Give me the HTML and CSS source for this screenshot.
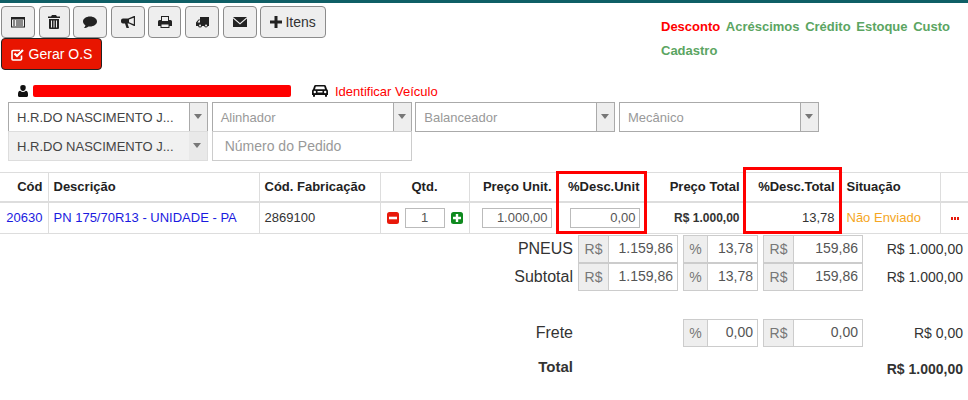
FILE: index.html
```html
<!DOCTYPE html>
<html lang="pt-BR">
<head>
<meta charset="utf-8">
<title>Ordem de Serviço</title>
<link rel="stylesheet" href="styles.css">
</head>
<body>
<div class="topbar"></div>
<header class="header">
  <div class="toolbar">
    <div class="btn-row">
      <button class="btn w34"><svg class="ico" viewBox="0 0 14 14"><path fill-rule="evenodd" d="M0 2h14v10.500H0zM1 4.500v7h12v-7zM2 5.500h2v1H2zM5 5.500h7v1H5zM2 7.500h2v1H2zM5 7.500h7v1H5zM2 9.500h2v1H2zM5 9.500h7v1H5z"/></svg></button>
      <button class="btn w31"><svg class="ico" viewBox="0 0 14 14"><path fill-rule="evenodd" d="M5 0h4l1 1.600h3V3H1V1.600h3zM2 4h10v9a1 1 0 0 1-1 1H3a1 1 0 0 1-1-1zM4 5.500v7h1v-7zM6.500 5.500v7h1v-7zM9 5.500v7h1v-7z"/></svg></button>
      <button class="btn w34"><svg class="ico" viewBox="0 0 14 14"><path d="M7 1.500c3.900 0 7 2.200 7 5s-3.100 5-7 5c-.6 0-1.100 0-1.600-.1C4 12.700 2.500 13 .8 13c.9-.8 1.500-1.700 1.600-2.800C.9 9.300 0 8 0 6.500c0-2.800 3.100-5 7-5z"/></svg></button>
      <button class="btn w34"><svg class="ico" viewBox="0 0 14 14"><path fill-rule="evenodd" d="M14 1v10h-1L8 8.500H6.500L8 13H5.500L4 8.500H2a2 2 0 0 1-2-2v-1a2 2 0 0 1 2-2h5L13 1zM12.800 2.700 8 4.500v2.800l4.800 1.900z"/></svg></button>
      <button class="btn w33"><svg class="ico" viewBox="0 0 14 14"><path fill-rule="evenodd" d="M3 1h8v4h1.500A1.500 1.500 0 0 1 14 6.500V11h-2.500v2h-9v-2H0V6.500A1.500 1.500 0 0 1 1.500 5H3zM4 2v4h6V2zM3.500 9.500V12h7V9.500z"/></svg></button>
      <button class="btn w34"><svg class="ico" viewBox="0 0 14 14"><path fill-rule="evenodd" d="M5 2h9v9h-1.100a2 2 0 0 1-3.800 0H7a2 2 0 0 1-3.900 0H1V7.500L3.500 4.500H5zM2.500 7.500H5V5.300H4zM5 9.500a1 1 0 1 0 .1 2 1 1 0 0 0-.1-2zM11 9.500a1 1 0 1 0 .1 2 1 1 0 0 0-.1-2z"/></svg></button>
      <button class="btn w34"><svg class="ico" viewBox="0 0 14 14"><path d="M0 2h14L7 8zM0 3.500V12h14V3.500L7 9.500z"/></svg></button>
      <button class="btn w66"><svg class="ico ico-plus" viewBox="0 0 12 12"><path d="M4.500 0h3v4.500H12v3H7.500V12h-3V7.500H0v-3h4.500z"/></svg>Itens</button>
    </div>
    <button class="btn btn-danger"><svg class="ico ico-check" viewBox="0 0 13 13"><path fill="none" stroke="#fff" stroke-width="1.600" d="M10.500 7.500V11a1 1 0 0 1-1 1H2a1 1 0 0 1-1-1V3.500a1 1 0 0 1 1-1h7"/><path fill="none" stroke="#fff" stroke-width="2.200" d="M3.500 5.500 6 8l6-6"/></svg>Gerar O.S</button>
  </div>
  <nav class="links">
    <span class="link link-active">Desconto</span>
    <span class="link">Acréscimos</span>
    <span class="link">Crédito</span>
    <span class="link">Estoque</span>
    <span class="link">Custo</span>
    <span class="link">Cadastro</span>
  </nav>
</header>

<div class="client">
  <svg class="ico-user" viewBox="0 0 10 12"><path d="M5 0a2.700 2.700 0 0 1 2.700 3C7.700 4.600 6.600 6 5 6S2.300 4.600 2.300 3A2.700 2.700 0 0 1 5 0zM2.200 5.800C3 6.600 4 7 5 7s2-.4 2.800-1.200C9.300 6 10 7 10 9v1.500c0 .8-.6 1.500-1.500 1.500h-7C.6 12 0 11.300 0 10.500V9c0-2 .7-3 2.200-3.200z"/></svg>
  <div class="redacted"></div>
  <svg class="ico-car" viewBox="0 0 16 12"><path fill-rule="evenodd" d="M3.500 0h9c.7 0 1.200.4 1.400 1L15 4.200c.6.400 1 1 1 1.800v4h-1v1a1 1 0 0 1-2 0v-1H3v1a1 1 0 0 1-2 0v-1H0V6c0-.8.400-1.400 1-1.800L2.100 1C2.300.4 2.800 0 3.500 0zM3.800 1.500 3 4.200h10l-.8-2.700zM2.800 5.800a1.200 1.200 0 1 0 0 2.400 1.200 1.200 0 0 0 0-2.400zM13.200 5.800a1.200 1.200 0 1 0 0 2.400 1.200 1.200 0 0 0 0-2.400zM5.500 6v1.500h5V6z"/></svg>
  <span class="vehicle">Identificar Veículo</span>
</div>

<div class="selects">
  <div class="select"><span class="select-value">H.R.DO NASCIMENTO J...</span><span class="select-arrow"></span></div>
  <div class="select"><span class="select-value placeholder">Alinhador</span><span class="select-arrow"></span></div>
  <div class="select"><span class="select-value placeholder">Balanceador</span><span class="select-arrow"></span></div>
  <div class="select"><span class="select-value placeholder">Mecânico</span><span class="select-arrow"></span></div>
  <div class="select select-disabled"><span class="select-value">H.R.DO NASCIMENTO J...</span><span class="select-arrow"></span></div>
  <div class="order-input">Número do Pedido</div>
</div>

<div class="table-wrap">
  <table class="items">
    <colgroup>
      <col class="c-cod"><col class="c-desc"><col class="c-fab"><col class="c-qtd"><col class="c-unit"><col class="c-dunit"><col class="c-total"><col class="c-dtotal"><col class="c-sit"><col class="c-act">
    </colgroup>
    <thead>
      <tr>
        <th class="right">Cód</th>
        <th>Descrição</th>
        <th>Cód. Fabricação</th>
        <th class="center">Qtd.</th>
        <th class="right">Preço Unit.</th>
        <th class="right">%Desc.Unit</th>
        <th class="right">Preço Total</th>
        <th class="right">%Desc.Total</th>
        <th class="sit">Situação</th>
        <th></th>
      </tr>
    </thead>
    <tbody>
      <tr>
        <td class="right blue">20630</td>
        <td class="blue">PN 175/70R13 - UNIDADE - PA</td>
        <td>2869100</td>
        <td>
          <div class="qty">
            <svg class="qty-ico" viewBox="0 0 12 12"><rect width="12" height="12" rx="2.500" fill="#e8190b"/><rect x="2" y="4.700" width="8" height="2.600" fill="#fff"/></svg>
            <span class="field qty-field">1</span>
            <svg class="qty-ico" viewBox="0 0 12 12"><rect width="12" height="12" rx="2.500" fill="#0f8a1f"/><path fill="#fff" d="M4.800 2h2.400v2.800H10v2.400H7.200V10H4.800V7.200H2V4.800h2.800z"/></svg>
          </div>
        </td>
        <td class="right"><span class="field num-field">1.000,00</span></td>
        <td class="right"><span class="field num-field">0,00</span></td>
        <td class="right strong">R$ 1.000,00</td>
        <td class="right">13,78</td>
        <td class="sit orange">Não Enviado</td>
        <td class="act"><span class="dots"><i></i><i></i><i></i></span></td>
      </tr>
    </tbody>
  </table>
  <div class="mark mark-unit"></div>
  <div class="mark mark-total"></div>
</div>

<section class="totals">
  <div class="total-row">
    <div class="t-label">PNEUS</div>
    <div class="group"><span class="addon a-rs">R$</span><span class="gval">1.159,86</span></div>
    <div class="group"><span class="addon a-pc">%</span><span class="gval">13,78</span></div>
    <div class="group"><span class="addon a-rs">R$</span><span class="gval">159,86</span></div>
    <div class="t-value">R$ 1.000,00</div>
  </div>
  <div class="total-row">
    <div class="t-label">Subtotal</div>
    <div class="group"><span class="addon a-rs">R$</span><span class="gval">1.159,86</span></div>
    <div class="group"><span class="addon a-pc">%</span><span class="gval">13,78</span></div>
    <div class="group"><span class="addon a-rs">R$</span><span class="gval">159,86</span></div>
    <div class="t-value">R$ 1.000,00</div>
  </div>
  <div class="total-row row-frete">
    <div class="t-label">Frete</div>
    <div></div>
    <div class="group"><span class="addon a-pc">%</span><span class="gval">0,00</span></div>
    <div class="group"><span class="addon a-rs">R$</span><span class="gval">0,00</span></div>
    <div class="t-value">R$ 0,00</div>
  </div>
  <div class="total-row row-total">
    <div class="t-label">Total</div>
    <div></div><div></div><div></div>
    <div class="t-value">R$ 1.000,00</div>
  </div>
</section>
</body>
</html>
```

FILE: styles.css
```css
* { box-sizing: border-box; }
html, body { margin: 0; padding: 0; background: #fff; }
body { font-family: "Liberation Sans", Arial, sans-serif; font-size: 13px; color: #333; overflow: hidden; }

.topbar { height: 3px; background: #0f5f66; }

.header { display: flex; justify-content: space-between; padding: 3px 0 0 1px; height: 78px; }
.toolbar { display: flex; flex-direction: column; align-items: flex-start; }
.btn-row { display: flex; gap: 3.6px; }
.btn {
  display: flex; align-items: center; justify-content: center;
  height: 32px; padding: 0; border: 1px solid #8c8c8c; border-radius: 4px;
  background: #eee; color: #333; font: 14px "Liberation Sans", Arial, sans-serif;
}
.w31 { width: 31px; } .w33 { width: 33px; } .w34 { width: 34px; } .w66 { width: 66px; }
.ico { width: 14px; height: 14px; fill: #222; }
.ico-plus { width: 12px; height: 12px; margin-right: 3px; }
.btn-danger { width: 101px; height: 32px; background: #e81500; border-color: #222; color: #fff; }
.ico-check { width: 13px; height: 13px; margin-right: 5px; fill: none; }

.links { display: flex; flex-wrap: wrap; align-content: flex-start; column-gap: 5.6px; width: 307px; padding-top: 9px; line-height: 24px; }
.link { font-weight: bold; font-size: 13px; color: #5ba562; }
.link-active { color: #f00; }

.client { display: flex; align-items: center; height: 20px; padding-left: 18px; }
.ico-user { width: 10px; height: 12px; fill: #111; }
.redacted { width: 258px; height: 12px; margin-left: 5px; background: #f00; border-radius: 2px; }
.ico-car { width: 16px; height: 12px; margin-left: 21px; fill: #111; }
.vehicle { margin-left: 7px; font-size: 13px; color: #f00; }

.selects { display: grid; grid-template-columns: repeat(4, 200px); column-gap: 3.67px; margin-top: 1px; padding-left: 8px; }
.select { display: flex; height: 30px; border: 1px solid #aaa; background: #fff; }
.select-value { flex: 1; padding-left: 8px; line-height: 29px; font-size: 13px; color: #444; }
.placeholder { color: #999; }
.select-arrow { position: relative; width: 18px; border-left: 1px solid #aaa; background: #eee; }
.select-arrow::after {
  content: ""; position: absolute; left: 4px; top: 11px;
  border: 4px solid transparent; border-top: 5px solid #777; border-bottom: 0;
}
.select-disabled { margin-top: -1px; border-color: #ddd; background: #f1f1f1; }
.select-disabled .select-arrow { border-left: 0; background: #e9e9e9; }
.order-input { height: 30px; margin-top: -1px; padding: 6px 0 0 12px; border: 1px solid #ccc; font-size: 14px; color: #999; }

.table-wrap { position: relative; margin-top: 11px; }
.items { width: 968px; table-layout: fixed; border-collapse: collapse; font-size: 13px; }
.c-cod { width: 48px; } .c-desc { width: 211px; } .c-fab { width: 121px; } .c-qtd { width: 89px; }
.c-unit { width: 88px; } .c-dunit { width: 88px; } .c-total { width: 100px; } .c-dtotal { width: 95px; }
.c-sit { width: 100px; } .c-act { width: 28px; }
.items th, .items td { padding: 0 5px; border: 1px solid #ddd; text-align: left; white-space: nowrap; overflow: hidden; }
.items th:first-child, .items td:first-child { border-left: 0; }
.items th:last-child, .items td:last-child { border-right: 0; }
.items th { height: 29px; font-size: 13px; font-weight: bold; color: #222; border-bottom-width: 2px; }
.items td { height: 32px; color: #333; }
.items .right { text-align: right; }
.items .center { text-align: center; }
.items .blue { color: #1a1ae0; }
.items .strong { font-size: 12px; font-weight: bold; }
.items .sit { padding-left: 6px; }
.items .orange { color: #f5a623; }
.items .act { padding-left: 10px; }
.field { display: inline-block; height: 20px; border: 1px solid #bbb; background: #fff; line-height: 18px; vertical-align: middle; font-size: 13px; color: #555; }
.num-field { width: 70px; padding-right: 3px; text-align: right; }
.qty { display: flex; align-items: center; justify-content: space-between; padding: 0 1px; }
.qty-ico { width: 12px; height: 12px; }
.qty-field { width: 40px; text-align: center; }
.dots { display: inline-flex; gap: 1px; vertical-align: middle; }
.dots i { width: 2px; height: 3px; background: #e8190b; }

.mark { position: absolute; border: 3px solid #f00; pointer-events: none; }
.mark-unit { left: 556px; top: -1px; width: 91px; height: 63px; }
.mark-total { left: 743px; top: -5px; width: 99px; height: 67px; }

.totals { margin-top: 1px; }
.total-row { display: grid; grid-template-columns: 573px 100px 75px 100px 1fr; column-gap: 5px; height: 28px; align-items: stretch; }
.t-label { text-align: right; font-size: 16px; line-height: 28px; color: #333; }
.t-value { padding-right: 5px; text-align: right; font-size: 14px; line-height: 28px; color: #333; }
.group { display: flex; border: 1px solid #ccc; background: #fff; }
.addon { flex: none; border-right: 1px solid #ccc; background: #eee; text-align: center; font-size: 14px; line-height: 26px; color: #777; }
.a-rs { width: 30px; }
.a-pc { width: 24px; }
.gval { flex: 1; padding-right: 4px; text-align: right; font-size: 14px; line-height: 24px; color: #555; }
.row-frete { margin-top: 28px; }
.row-total { margin-top: 8px; height: 26px; }
.row-total .t-label { margin-top: -1px; font-size: 15px; font-weight: bold; line-height: 26px; }
.row-total .t-value { font-weight: bold; line-height: 28px; }
```
